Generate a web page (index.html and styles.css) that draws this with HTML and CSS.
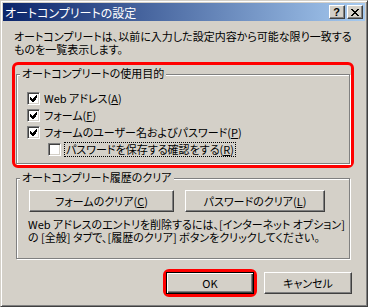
FILE: index.html
```html
<!DOCTYPE html>
<html lang="ja">
<head>
<meta charset="utf-8">
<title>オートコンプリートの設定</title>
<link rel="stylesheet" href="styles.css">
</head>
<body>
<div class="window">
  <div class="titlebar">
    <span class="title">オートコンプリートの設定</span>
    <div class="caps">
      <div class="cap cap-help">?</div>
      <div class="cap cap-close">
        <svg width="8" height="7" viewBox="0 0 8 7" shape-rendering="crispEdges">
          <path fill="#000" d="M0 0h2v1h-2z M6 0h2v1h-2z M1 1h2v1h-2z M5 1h2v1h-2z M2 2h4v1h-4z M3 3h2v1h-2z M2 4h4v1h-4z M1 5h2v1h-2z M5 5h2v1h-2z M0 6h2v1h-2z M6 6h2v1h-2z"/>
        </svg>
      </div>
    </div>
  </div>
  <div class="client">
    <p class="desc">オートコンプリートは、以前に入力した設定内容から可能な限り一致する<br>ものを一覧表示します。</p>

    <div class="ring ring-group">
      <div class="group group-use">
        <span class="legend">オートコンプリートの使用目的</span>
        <div class="rows">
          <div class="row">
            <span class="cb checked"><svg width="7" height="7" viewBox="0 0 7 7" shape-rendering="crispEdges"><path fill="#000" d="M6 0h1v3h-1z M5 1h1v4h-1z M4 2h1v4h-1z M3 3h1v4h-1z M2 4h1v3h-1z M1 3h1v3h-1z M0 2h1v3h-1z"/></svg></span>
            <span class="lbl">Web アドレス(<u>A</u>)</span>
          </div>
          <div class="row">
            <span class="cb checked"><svg width="7" height="7" viewBox="0 0 7 7" shape-rendering="crispEdges"><path fill="#000" d="M6 0h1v3h-1z M5 1h1v4h-1z M4 2h1v4h-1z M3 3h1v4h-1z M2 4h1v3h-1z M1 3h1v3h-1z M0 2h1v3h-1z"/></svg></span>
            <span class="lbl">フォーム(<u>F</u>)</span>
          </div>
          <div class="row">
            <span class="cb checked"><svg width="7" height="7" viewBox="0 0 7 7" shape-rendering="crispEdges"><path fill="#000" d="M6 0h1v3h-1z M5 1h1v4h-1z M4 2h1v4h-1z M3 3h1v4h-1z M2 4h1v3h-1z M1 3h1v3h-1z M0 2h1v3h-1z"/></svg></span>
            <span class="lbl">フォームのユーザー名およびパスワード(<u>P</u>)</span>
          </div>
          <div class="row row-nested">
            <span class="cb"></span>
            <span class="lbl focus">パスワードを保存する確認をする(<u>R</u>)</span>
          </div>
        </div>
      </div>
    </div>

    <div class="group group-clear">
      <span class="legend">オートコンプリート履歴のクリア</span>
      <div class="clear-btns">
        <div class="btn btn-forms">フォームのクリア(<u>C</u>)</div>
        <div class="btn btn-pw">パスワードのクリア(<u>L</u>)</div>
      </div>
      <p class="note">Web アドレスのエントリを削除するには、[インターネット オプション]<br>の [全般] タブで、[履歴のクリア] ボタンをクリックしてください。</p>
    </div>

    <div class="footer">
      <div class="ring ring-ok">
        <div class="btn btn-dialog btn-default">OK</div>
      </div>
      <div class="btn btn-dialog btn-cancel">キャンセル</div>
    </div>
  </div>
</div>
</body>
</html>
```

FILE: styles.css
```css
* { box-sizing: border-box; }

html, body {
  margin: 0;
  padding: 0;
  background: #D4D0C8;
}

body {
  font-family: "Noto Sans CJK JP", "Noto Sans", sans-serif;
  font-size: 11px;
  line-height: 13px;
  color: #000;
  font-feature-settings: "palt";
}

u { text-decoration: underline; text-underline-offset: 1px; }

.window {
  width: 368px;
  height: 307px;
  background: #D4D0C8;
  border: 1px solid;
  border-color: #D4D0C8 #404040 #404040 #D4D0C8;
  box-shadow: inset 1px 1px 0 #fff, inset -1px -1px 0 #808080;
  padding: 2px;
}

.titlebar {
  height: 18px;
  display: flex;
  align-items: center;
  padding: 0 2px;
  background: linear-gradient(to right, #0A246A, #A6CAF0);
}

.title {
  color: #fff;
  font-size: 12px;
  white-space: nowrap;
}

.caps {
  margin-left: auto;
  display: flex;
  gap: 2px;
}

.cap {
  width: 16px;
  height: 14px;
  background: #D4D0C8;
  border: 1px solid;
  border-color: #fff #404040 #404040 #fff;
  box-shadow: inset -1px -1px 0 #808080;
  display: flex;
  align-items: center;
  justify-content: center;
}

.cap-help {
  font-family: "Liberation Sans", sans-serif;
  font-weight: bold;
  font-size: 11px;
  line-height: 11px;
  padding-right: 1px;
}

.cap-close svg { display: block; }

.client {
  display: flex;
  flex-direction: column;
  align-items: flex-start;
}

.desc {
  margin: 9px 0 0 11px;
  white-space: nowrap;
}

.ring {
  border: 3px solid #FF0000;
  border-radius: 6px;
}

.ring-group {
  margin: 6px 0 0 9px;
  width: 342px;
  padding: 9px 1px 1px 1px;
}

.group {
  width: 334px;
  border: 1px solid #808080;
  box-shadow: 1px 1px 0 #fff, inset 1px 1px 0 #fff;
  display: flex;
  flex-direction: column;
  align-items: flex-start;
}

.legend {
  margin: -8px 0 0 3px;
  padding: 0 2px;
  background: #D4D0C8;
  white-space: nowrap;
}

.group-use { padding-bottom: 5px; }

.rows {
  margin-top: 10px;
  display: flex;
  flex-direction: column;
}

.row {
  height: 17px;
  display: flex;
  align-items: center;
  white-space: nowrap;
}

.cb {
  width: 13px;
  height: 13px;
  flex: none;
  margin-left: 10px;
  background: #fff;
  border: 1px solid;
  border-color: #808080 #fff #fff #808080;
  box-shadow: inset 1px 1px 0 #404040, inset -1px -1px 0 #D4D0C8;
}

.cb svg { display: block; margin: 2px 0 0 2px; }

.lbl { margin-left: 4px; }

.row-nested .cb { margin-left: 31px; }

.row-nested .lbl {
  margin-left: 3px;
  padding: 0 1px;
  border: 1px dotted #000;
}

.group-clear {
  margin: 10px 0 0 13px;
  padding-bottom: 14px;
}

.clear-btns {
  margin: 6px 0 0 12px;
  display: flex;
  gap: 11px;
}

.btn {
  height: 22px;
  background: #D4D0C8;
  border: 1px solid;
  border-color: #fff #404040 #404040 #fff;
  box-shadow: inset -1px -1px 0 #808080;
  display: flex;
  align-items: center;
  justify-content: center;
  white-space: nowrap;
}

.btn-forms { width: 145px; }
.btn-pw { width: 140px; }

.note {
  margin: 6px 0 0 11px;
  white-space: nowrap;
}

.footer {
  align-self: stretch;
  margin-top: 10px;
  padding-right: 13px;
  display: flex;
  justify-content: flex-end;
  align-items: center;
  gap: 7px;
}

.ring-ok { padding: 0; }

.btn-dialog { width: 88px; }

.btn-default {
  border-color: #000;
  box-shadow: inset 1px 1px 0 #fff, inset -1px -1px 0 #404040, inset -2px -2px 0 #808080;
}
```
